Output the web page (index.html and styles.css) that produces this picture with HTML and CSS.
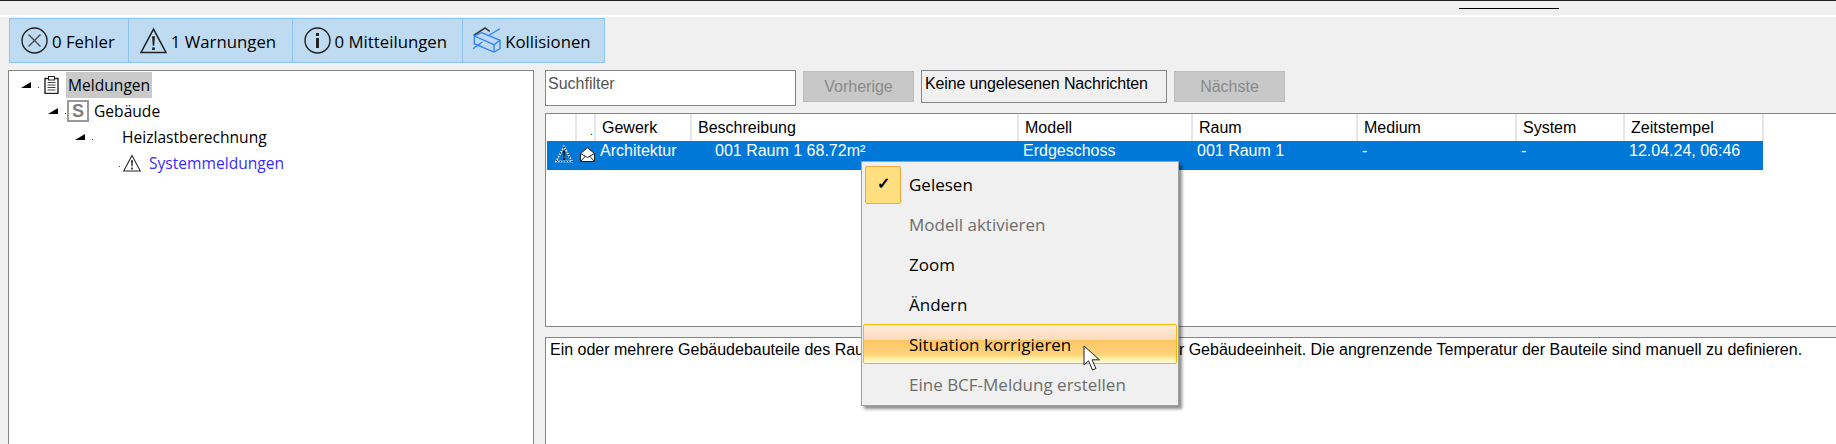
FILE: index.html
```html
<!DOCTYPE html>
<html lang="de">
<head>
<meta charset="utf-8">
<title>Meldungen</title>
<link rel="stylesheet" href="styles.css">
</head>
<body>
<svg class="defs" width="0" height="0" aria-hidden="true">
  <defs>
    <symbol id="warn" viewBox="0 0 26 26">
      <path d="M13 2 L25 24.5 H1 Z" fill="none" stroke="currentColor" stroke-width="1.5" stroke-linejoin="miter"/>
      <path d="M11.6 9 H14.4 L13.7 18 H12.3 Z" fill="currentColor"/>
      <rect x="11.7" y="19.6" width="2.6" height="2.6" fill="currentColor"/>
    </symbol>
    <symbol id="twist" viewBox="0 0 18 8">
      <path d="M0 7 L10 7 L10 1 Z" fill="#000"/>
      <rect x="17" y="6" width="1" height="1" fill="#444"/>
    </symbol>
  </defs>
</svg>
<header class="titlebar"><span class="titlebar-mark"></span></header>
<nav class="toolbar">
  <button class="tool tool-a">
    <svg class="tool-icon" viewBox="0 0 27 27"><circle cx="13.5" cy="13.5" r="12.5" fill="none" stroke="#222" stroke-width="1.4"/><path d="M7.5 7.5 L19.5 19.5 M19.5 7.5 L7.5 19.5" stroke="#444" stroke-width="1.3"/></svg>
    <span>0 Fehler</span>
  </button>
  <button class="tool tool-b">
    <svg class="tool-icon tool-warn"><use href="#warn"/></svg>
    <span>1 Warnungen</span>
  </button>
  <button class="tool tool-c">
    <svg class="tool-icon" viewBox="0 0 27 27"><circle cx="13.5" cy="13.5" r="12.5" fill="none" stroke="#222" stroke-width="1.4"/><rect x="12" y="6" width="3" height="3" fill="#222"/><rect x="12" y="11" width="3" height="10" fill="#222"/></svg>
    <span>0 Mitteilungen</span>
  </button>
  <button class="tool tool-d">
    <svg class="tool-icon tool-box" viewBox="0 0 28 27"><path d="M.7 8.3 L12 1 L16.7 4.3" fill="none" stroke="#333" stroke-width="1.5"/><g fill="none" stroke="#2f80ff" stroke-width="1.3"><path d="M1.3 9 V16.7 L21 25 L27 21.7 V13.3 L8.7 5.7 Z"/><path d="M1.3 9 L21 17.7 L27 13.3 M21 17.7 V25"/><path d="M0 21.7 L9.3 15 M16 8.3 L27 1.7"/></g></svg>
    <span>Kollisionen</span>
  </button>
</nav>
<main class="workspace">
  <aside class="tree">
    <div class="tree-row row-1">
      <svg class="twist"><use href="#twist"/></svg>
      <svg class="clip" viewBox="0 0 15 18"><rect x="1" y="2.5" width="13" height="15" fill="none" stroke="#222" stroke-width="1.4"/><rect x="4.5" y=".5" width="6" height="3.5" fill="#fff" stroke="#222"/><path d="M3.5 6.5 H11.5 M3.5 9 H11.5 M3.5 11.5 H11.5 M3.5 14 H11.5" stroke="#444"/></svg>
      <span class="tree-label is-current">Meldungen</span>
    </div>
    <div class="tree-row row-2">
      <svg class="twist"><use href="#twist"/></svg>
      <span class="s-badge">S</span>
      <span class="tree-label">Gebäude</span>
    </div>
    <div class="tree-row row-3">
      <svg class="twist"><use href="#twist"/></svg>
      <span class="tree-label">Heizlastberechnung</span>
    </div>
    <div class="tree-row row-4">
      <span class="dot"></span>
      <svg class="tree-warn"><use href="#warn"/></svg>
      <span class="tree-label is-link">Systemmeldungen</span>
    </div>
  </aside>
  <section class="content">
    <div class="filters">
      <div class="search">Suchfilter</div>
      <button class="nav-btn" disabled>Vorherige</button>
      <div class="status">Keine ungelesenen Nachrichten</div>
      <button class="nav-btn" disabled>Nächste</button>
    </div>
    <div class="grid-box">
      <table class="messages">
        <colgroup>
          <col class="c1"><col class="c2"><col class="c3"><col class="c4"><col class="c5"><col class="c6"><col class="c7"><col class="c8"><col class="c9">
        </colgroup>
        <thead>
          <tr>
            <th></th><th class="dot-head">.</th><th>Gewerk</th><th>Beschreibung</th><th>Modell</th><th>Raum</th><th>Medium</th><th>System</th><th>Zeitstempel</th>
          </tr>
        </thead>
        <tbody>
          <tr>
            <td class="cell-icon"><svg class="row-warn" viewBox="0 0 18 18"><path d="M9 1.5 L17 16.5 H1 Z" fill="none" stroke="#fff" stroke-width="1.6"/><path d="M9 1.5 L17 16.5 H1 Z" fill="none" stroke="#111" stroke-width="1.2" stroke-dasharray="1.4 1.4"/><path d="M8 6 H10 L9.5 12 H8.5 Z" fill="#111"/><rect x="8" y="13" width="2" height="2" fill="#111"/></svg></td>
            <td class="cell-icon"><svg class="row-mail" viewBox="0 0 15 15"><path d="M.5 6.5 L7.5 .8 L14.5 6.5 V14.5 H.5 Z" fill="#fff" stroke="#222"/><path d="M.5 6.5 L7.5 10.5 L14.5 6.5 M.5 14.5 L5.5 9 M14.5 14.5 L9.5 9" fill="none" stroke="#222"/></svg></td>
            <td class="col-trade">Architektur</td>
            <td class="col-desc">001 Raum 1 68.72m²</td>
            <td>Erdgeschoss</td>
            <td>001 Raum 1</td>
            <td>-</td>
            <td>-</td>
            <td>12.04.24, 06:46</td>
          </tr>
        </tbody>
      </table>
    </div>
    <div class="details">Ein oder mehrere Gebäudebauteile des Raumes haben keine gültige Verbindung zu einer Gebäudeeinheit. Die angrenzende Temperatur der Bauteile sind manuell zu definieren.</div>
  </section>
</main>
<div class="menu">
  <div class="menu-item is-checked"><span class="check">✓</span>Gelesen</div>
  <div class="menu-item is-off">Modell aktivieren</div>
  <div class="menu-item">Zoom</div>
  <div class="menu-item">Ändern</div>
  <div class="menu-item is-hot">Situation korrigieren</div>
  <div class="menu-item is-off">Eine BCF-Meldung erstellen</div>
</div>
<svg class="cursor" viewBox="0 0 18 26"><path d="M1 1 V20 L5.5 15.8 L9.5 25 L13 23.5 L9 14.8 H16.5 Z" fill="#fff" stroke="#222" stroke-width="1"/></svg>
</body>
</html>
```
FILE: styles.css
```css
* { box-sizing: border-box; }
html, body { margin: 0; height: 100%; overflow: hidden; }
body {
  background: #f0f0f0;
  font-family: "Open Sans", "Noto Sans", sans-serif;
  color: #000;
  display: flex;
  flex-direction: column;
  height: 444px;
}
.defs { position: absolute; }

.titlebar {
  height: 17px;
  flex: none;
  border-top: 1px solid #222;
  border-bottom: 2px solid #fff;
  padding-left: 1459px;
}
.titlebar-mark {
  display: block;
  width: 100px;
  height: 1px;
  margin-top: 7px;
  background: #000;
}

.toolbar {
  display: flex;
  flex: none;
  margin: 1px 0 0 9px;
  width: 596px;
  height: 45px;
}
.tool {
  display: flex;
  align-items: center;
  gap: 4px;
  height: 100%;
  background: #bfdbf2;
  border: 1px solid #8cc4f4;
  border-left-width: 0;
  padding: 0;
  font: 16.8px "Open Sans", sans-serif;
  color: #000;
}
.tool span { white-space: nowrap; padding-top: 2px; }
.tool-a { width: 120px; padding-left: 11px; border-left-width: 1px; }
.tool-b { width: 164px; padding-left: 11px; }
.tool-c { width: 171px; padding-left: 11px; }
.tool-d { width: 142px; padding-left: 10px; }
.tool-icon { width: 27px; height: 27px; flex: none; }
.tool-warn { color: #222; }
.tool-box { width: 28px; }

.workspace {
  display: flex;
  flex: 1;
  min-height: 0;
  margin: 7px 0 0 8px;
  gap: 11px;
}

.tree {
  flex: none;
  width: 526px;
  background: #fff;
  border: 1px solid #85858a;
  border-bottom: 0;
  padding-top: 1px;
  font-size: 15.6px;
}
.tree-row { display: flex; align-items: center; height: 26px; }
.row-1 { padding-left: 12px; }
.row-2 { padding-left: 39px; }
.row-3 { padding-left: 66px; }
.row-4 { padding-left: 110px; }
.twist { width: 18px; height: 8px; flex: none; }
.clip { width: 15px; height: 18px; margin-left: 5px; flex: none; }
.tree-label { white-space: nowrap; }
.row-1 .tree-label { margin-left: 7px; }
.row-2 .tree-label { margin-left: 5px; }
.row-3 .tree-label { margin-left: 29px; }
.row-4 .tree-label { margin-left: 8px; }
.is-current {
  background: #c9c9c9;
  height: 26px;
  line-height: 26px;
  padding: 0 2px;
}
.is-link { color: #3a2bff; }
.s-badge {
  width: 22px;
  height: 22px;
  margin-left: 1px;
  border: 2px solid #999;
  display: flex;
  align-items: center;
  justify-content: center;
  font: bold 18px "Liberation Sans", sans-serif;
  color: #808080;
  flex: none;
}
.dot { width: 1px; height: 1px; background: #444; margin-top: 6px; flex: none; }
.tree-warn { width: 18px; height: 18px; margin-left: 3px; color: #222; flex: none; }

.content {
  flex: 1;
  min-width: 0;
  display: flex;
  flex-direction: column;
  font: 16px "Liberation Sans", sans-serif;
}
.filters { display: flex; align-items: flex-start; flex: none; height: 43px; }
.search {
  width: 251px;
  height: 36px;
  background: #fff;
  border: 1px solid #85858a;
  padding: 4px 2px;
  color: #555;
}
.nav-btn {
  width: 111px;
  height: 31px;
  margin: 1px 0 0 7px;
  background: #c8c8c8;
  border: 1px solid #bcbcbc;
  color: #8a8a8a;
  font: 16px "Liberation Sans", sans-serif;
  padding: 0;
}
.status {
  width: 246px;
  height: 33px;
  margin-left: 7px;
  background: #f0f0f0;
  border: 1px solid #85858a;
  padding: 4px 3px;
  white-space: nowrap;
  letter-spacing: -.14px;
}

.grid-box {
  flex: none;
  height: 214px;
  margin-right: -4px;
  background: #fff;
  border: 1px solid #85858a;
  padding: 0 0 0 1px;
}
.messages {
  table-layout: fixed;
  width: 1216px;
  border-collapse: collapse;
}
.c1 { width: 29px; }
.c2 { width: 19px; }
.c3 { width: 96px; }
.c4 { width: 327px; }
.c5 { width: 174px; }
.c6 { width: 165px; }
.c7 { width: 159px; }
.c8 { width: 108px; }
.c9 { width: 139px; }
.messages th {
  height: 27px;
  padding: 0 0 0 6px;
  font-weight: normal;
  text-align: left;
  border-right: 2px solid #e6e6e6;
}
.messages .dot-head { padding: 6px 0 0 13px; font-size: 11px; }
.messages td {
  height: 29px;
  padding: 0 0 9px 5px;
  background: #0078d7;
  color: #fff;
  white-space: nowrap;
}
.messages .cell-icon { padding: 4px 0 0 0; vertical-align: top; }
.messages .col-trade { padding-left: 5px; }
.messages .col-desc { padding-left: 24px; }
.row-warn { width: 18px; height: 18px; margin-left: 8px; display: block; }
.row-mail { width: 15px; height: 15px; margin-left: 4px; margin-top: 2px; display: block; }

.details {
  flex: none;
  height: 120px;
  margin: 10px -4px 0 0;
  background: #fff;
  border: 1px solid #85858a;
  border-bottom: 0;
  padding: 3px 4px;
  white-space: nowrap;
}

.menu {
  position: absolute;
  left: 861px;
  top: 161px;
  width: 318px;
  height: 245px;
  background: #f0f0f0;
  border: 1px solid #a0a0a0;
  padding: 3px 1px;
  box-shadow: 3px 3px 3px rgba(0, 0, 0, .45);
  font: 17px "Open Sans", sans-serif;
}
.menu-item {
  position: relative;
  height: 40px;
  line-height: 40px;
  padding-left: 46px;
  white-space: nowrap;
}
.is-off { color: #6d6d6d; }
.is-checked .check {
  position: absolute;
  left: 2px;
  top: 1px;
  width: 36px;
  height: 38px;
  background: #ffdf80;
  border: 1px solid #f5a63d;
  border-radius: 2px;
  line-height: 32px;
  text-align: center;
  font-size: 16px;
  font-weight: 600;
}
.is-hot {
  border: 1px solid #f5b900;
  border-radius: 2px;
  margin: -1px 0 1px;
  height: 40px;
  line-height: 40px;
  padding-left: 45px;
  background: linear-gradient(#fdebdc 0, #fcdcbc 38%, #fdc666 40%, #fed37a 78%, #fff3a8 90%, #fff9e0 100%);
}
.cursor {
  position: absolute;
  left: 1083px;
  top: 345px;
  width: 18px;
  height: 26px;
}
```
